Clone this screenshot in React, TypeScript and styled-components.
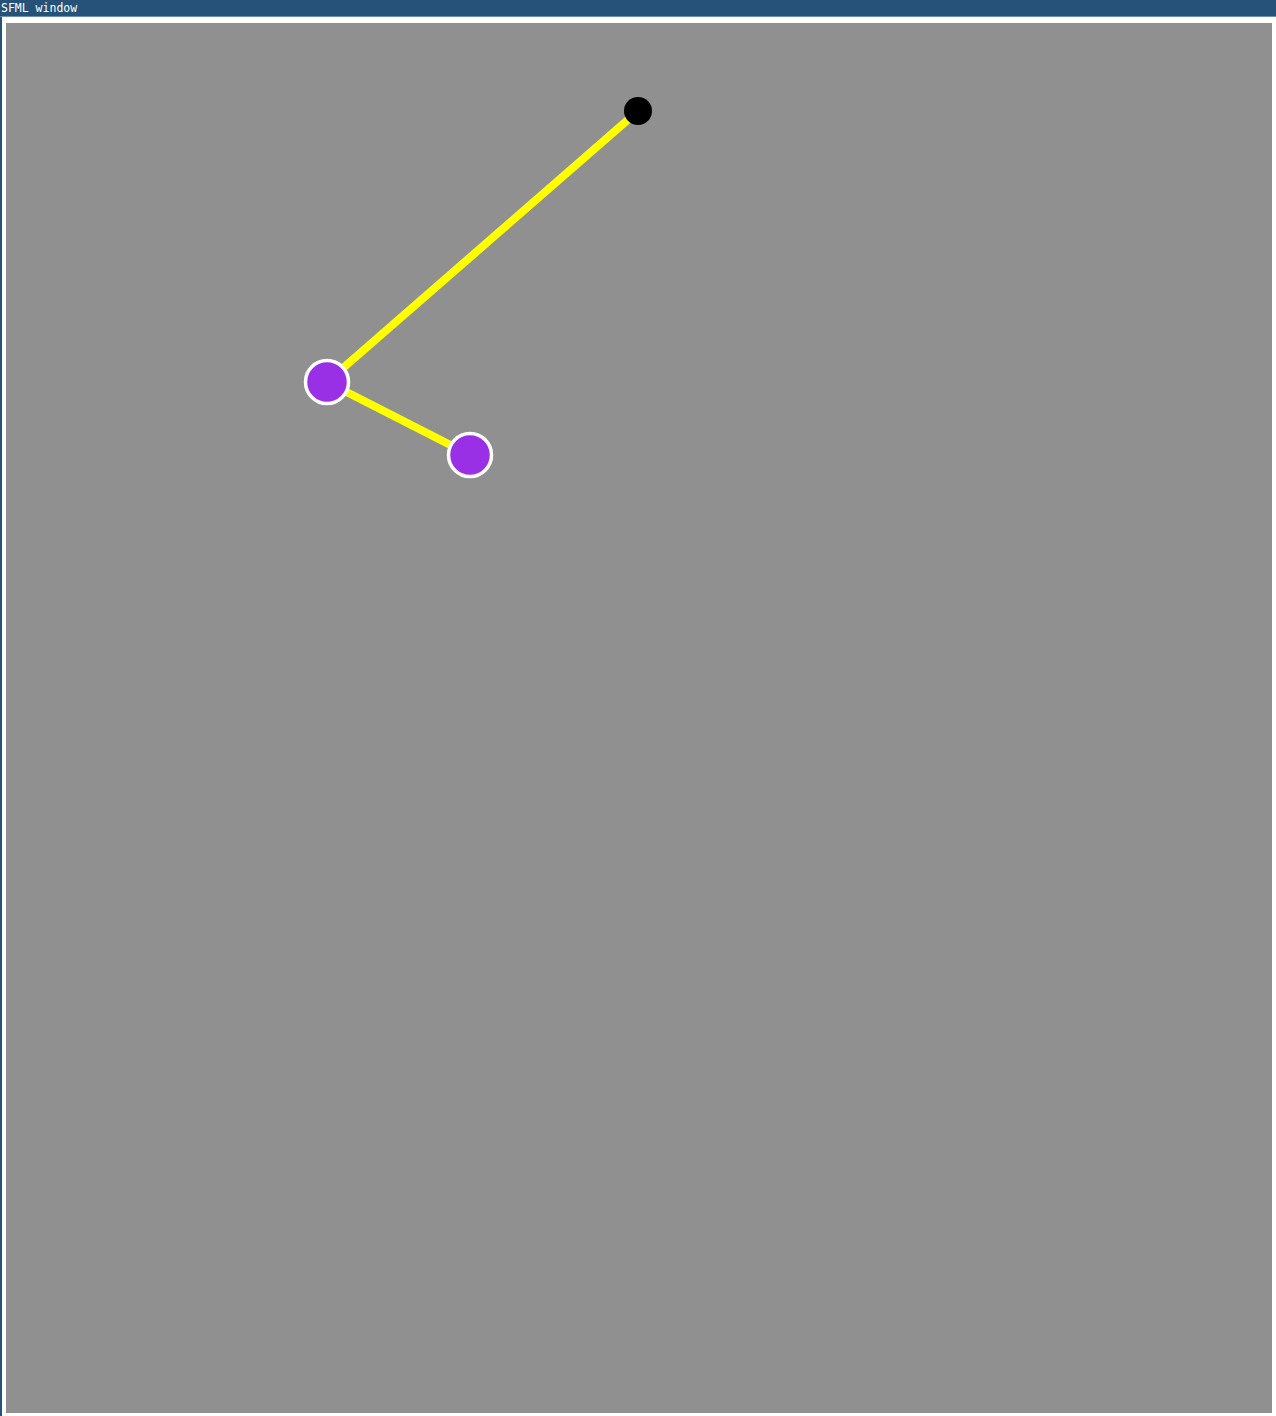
import styled, { createGlobalStyle } from 'styled-components';

const GlobalStyle = createGlobalStyle`
  html, body {
    margin: 0;
    padding: 0;
    background: #ffffff;
  }
`;

const Window = styled.div`
  width: 1276px;
  height: 1416px;
  display: flex;
  flex-direction: column;
  overflow: hidden;
`;

const TitleBar = styled.div`
  height: 16px;
  flex: none;
  background: #26527a;
  border-bottom: 1px solid #6f8fae;
  color: #ffffff;
  font-family: 'DejaVu Sans Mono', monospace;
  font-size: 11.5px;
  line-height: 17px;
  padding-left: 1px;
  white-space: nowrap;
`;

const Frame = styled.div`
  flex: 1;
  display: flex;
  border-left: 2px solid #26527a;
  background: #ffffff;
  padding: 6px 4px 3px 4px;
`;

const Canvas = styled.div`
  flex: 1;
  background: #909090;
  position: relative;
`;

const Scene = styled.svg`
  position: absolute;
  inset: 0;
  width: 100%;
  height: 100%;
`;

// page coords minus canvas origin (6, 23)
const pivot = { x: 632, y: 88 };
const bobs = [
  { x: 321, y: 359 },
  { x: 464, y: 432 },
];

export default function App() {
  const points = [pivot, ...bobs];
  return (
    <>
      <GlobalStyle />
      <Window>
        <TitleBar>SFML window</TitleBar>
        <Frame>
          <Canvas>
            <Scene>
              {points.slice(1).map((p, i) => (
                <line
                  key={i}
                  x1={points[i].x}
                  y1={points[i].y}
                  x2={p.x}
                  y2={p.y}
                  stroke="#ffff00"
                  strokeWidth={8}
                />
              ))}
              <circle cx={pivot.x} cy={pivot.y} r={14} fill="#000000" />
              {bobs.map((b, i) => (
                <circle
                  key={i}
                  cx={b.x}
                  cy={b.y}
                  r={21.5}
                  fill="#9a30e6"
                  stroke="#ffffff"
                  strokeWidth={3.5}
                />
              ))}
            </Scene>
          </Canvas>
        </Frame>
      </Window>
    </>
  );
}
